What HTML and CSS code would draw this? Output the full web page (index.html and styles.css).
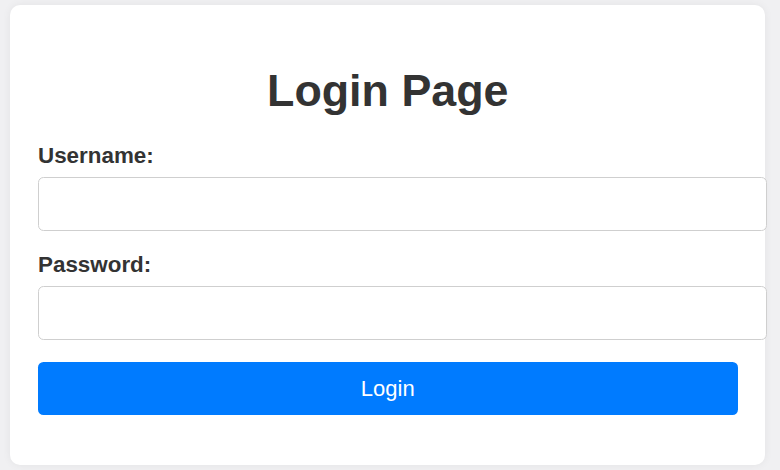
FILE: index.html
```html
<!DOCTYPE html>
<html lang="en">
<head>
<meta charset="utf-8">
<title>Login Page</title>
<link rel="stylesheet" href="styles.css">
</head>
<body>
<div class="card">
  <h2 class="title">Login Page</h2>
  <form class="form">
    <label class="label" for="username">Username:</label>
    <input class="field" type="text" id="username">
    <label class="label" for="password">Password:</label>
    <input class="field" type="password" id="password">
    <button class="btn" type="button">Login</button>
  </form>
</div>
</body>
</html>
```

FILE: styles.css
```css
html, body {
  margin: 0;
  padding: 0;
}
body {
  background: #f0f0f2;
  font-family: "Liberation Sans", Arial, sans-serif;
  padding: 5px 0 0 10px;
  height: 470px;
  box-sizing: border-box;
  overflow: hidden;
}
.card {
  width: 755px;
  box-sizing: border-box;
  background: #ffffff;
  border-radius: 10px;
  padding: 27.5px 27.5px 27.5px 28px;
  box-shadow: 0 0 8px rgba(0, 0, 0, 0.06);
  display: flow-root;
}
.title {
  margin: 32px 0 28px;
  font-size: 44.8px;
  line-height: 50px;
  font-weight: bold;
  color: #333333;
  text-align: center;
}
.form {
  display: block;
  margin: 0;
}
.label {
  display: block;
  font-size: 22.4px;
  line-height: 25px;
  font-weight: bold;
  color: #333333;
  margin-bottom: 9px;
}
.field {
  display: block;
  box-sizing: content-box;
  width: 100%;
  height: 25px;
  padding: 13.5px;
  margin: 0 0 21px;
  border: 1px solid #cfcfcf;
  border-radius: 5.5px;
  font-family: inherit;
  font-size: 22px;
  background: #ffffff;
  outline: none;
}
.btn {
  display: block;
  width: 100%;
  box-sizing: border-box;
  height: 53px;
  margin: 22px 0 22.5px;
  padding: 0;
  border: none;
  border-radius: 5.5px;
  background: #007bff;
  color: #ffffff;
  font-family: inherit;
  font-size: 22px;
  line-height: 25px;
}
```
